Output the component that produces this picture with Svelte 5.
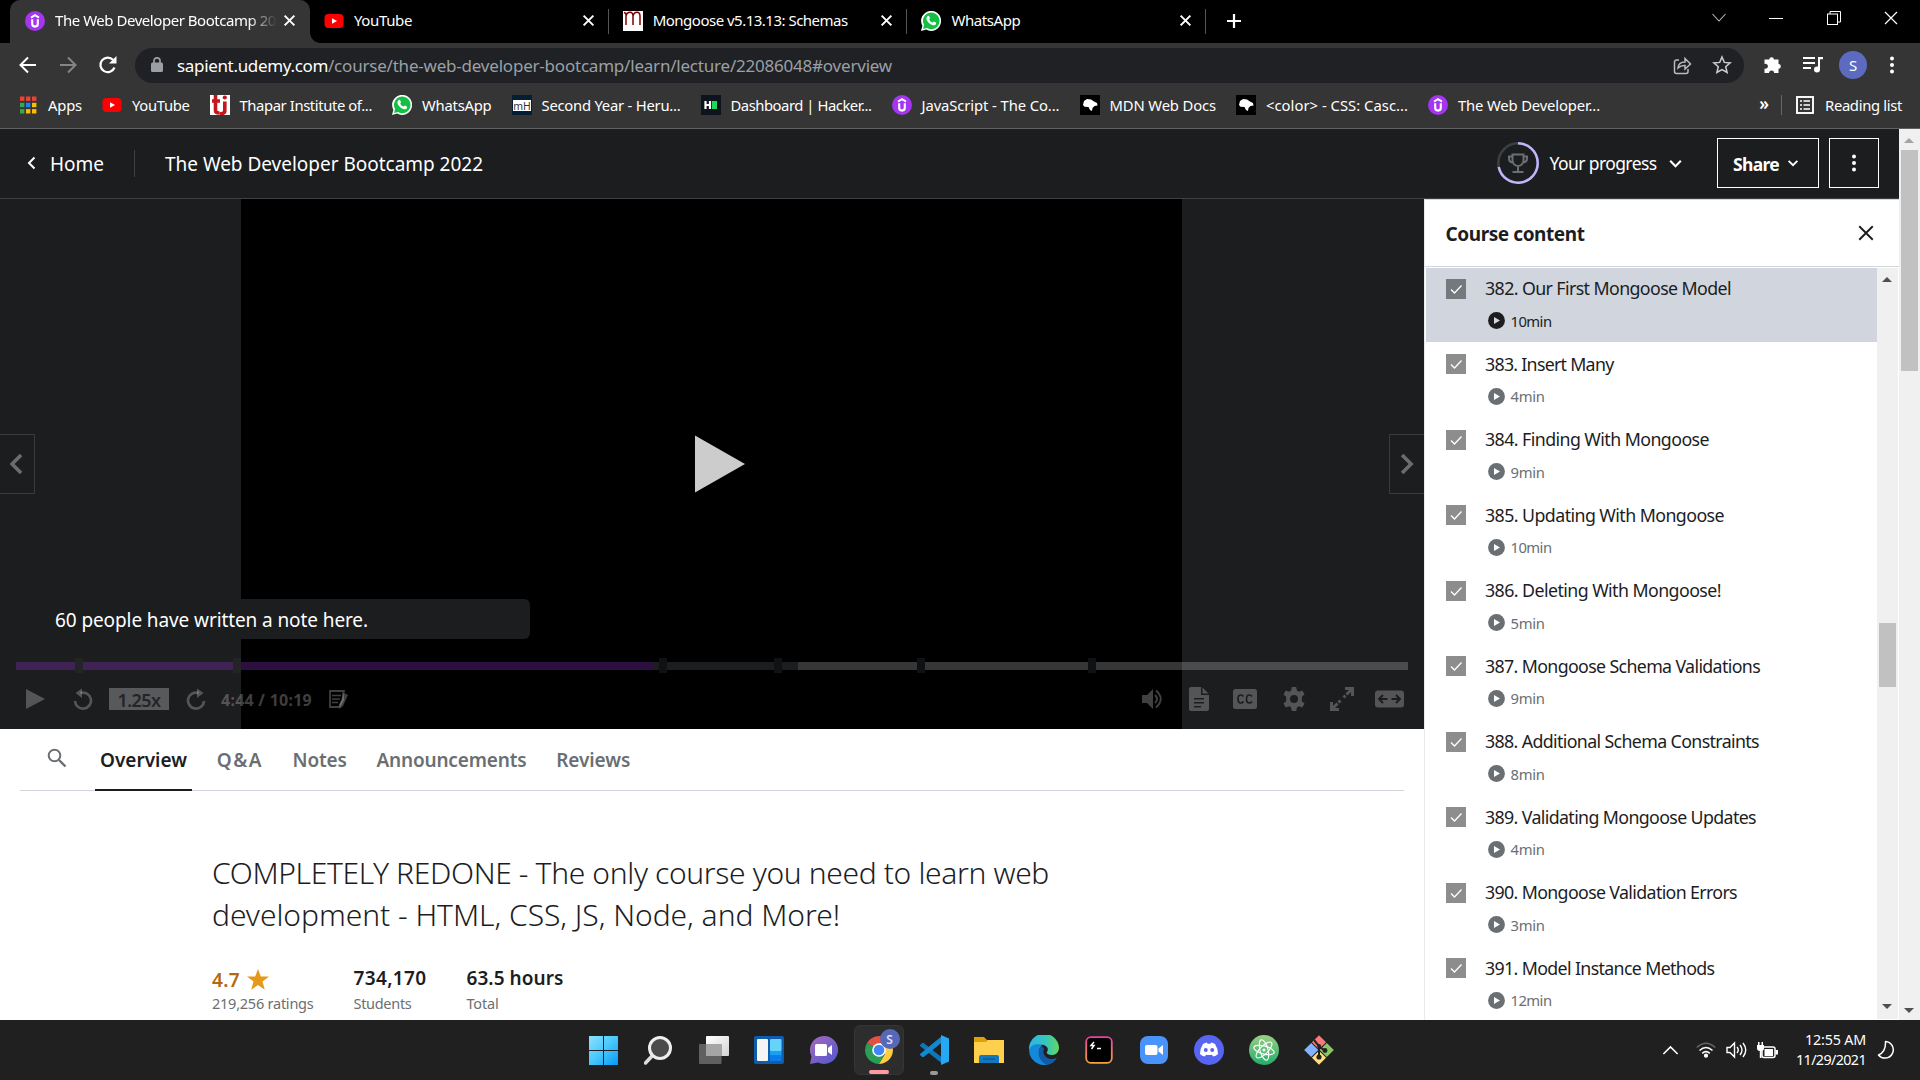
<script>
  // Tracks a label out (or in) so that it occupies the given width.
  function fit(node, width) {
    node.style.letterSpacing = '0';
    const natural = node.getBoundingClientRect().width;
    const count = node.textContent.length;
    node.style.letterSpacing = `${(width - natural) / count}px`;
  }

  const tabs = [
    { icon: 'udemy', title: 'The Web Developer Bootcamp 20', w: 221, active: true },
    { icon: 'youtube', title: 'YouTube', w: 58 },
    { icon: 'mongoose', title: 'Mongoose v5.13.13: Schemas', w: 195 },
    { icon: 'whatsapp', title: 'WhatsApp', w: 69 }
  ];

  const bookmarks = [
    { icon: 'apps', title: 'Apps', w: 34 },
    { icon: 'youtube', title: 'YouTube', w: 57.5 },
    { icon: 'thapar', title: 'Thapar Institute of...', w: 132.5 },
    { icon: 'whatsapp', title: 'WhatsApp', w: 69.5 },
    { icon: 'mh', title: 'Second Year - Heru...', w: 139 },
    { icon: 'hacker', title: 'Dashboard | Hacker...', w: 141 },
    { icon: 'udemy', title: 'JavaScript - The Co...', w: 138 },
    { icon: 'mdn', title: 'MDN Web Docs', w: 106.5 },
    { icon: 'mdn', title: '<color> - CSS: Casc...', w: 142 },
    { icon: 'udemy', title: 'The Web Developer...', w: 142 }
  ];

  const lectures = [
    { title: '382. Our First Mongoose Model', w: 246, time: '10min', active: true },
    { title: '383. Insert Many', w: 128.5, time: '4min' },
    { title: '384. Finding With Mongoose', w: 224, time: '9min' },
    { title: '385. Updating With Mongoose', w: 239, time: '10min' },
    { title: '386. Deleting With Mongoose!', w: 236, time: '5min' },
    { title: '387. Mongoose Schema Validations', w: 275, time: '9min' },
    { title: '388. Additional Schema Constraints', w: 274, time: '8min' },
    { title: '389. Validating Mongoose Updates', w: 271, time: '4min' },
    { title: '390. Mongoose Validation Errors', w: 252, time: '3min' },
    { title: '391. Model Instance Methods', w: 229.5, time: '12min' }
  ];

  const pageTabs = [
    { title: 'Overview', w: 87, active: true },
    { title: 'Q&A', w: 46 },
    { title: 'Notes', w: 54 },
    { title: 'Announcements', w: 150 },
    { title: 'Reviews', w: 74 }
  ];

  const markers = [75, 233, 659, 774, 917, 1088];
  const taskIcons = ['windows', 'search', 'taskview', 'widgets', 'teams', 'chrome', 'vscode', 'explorer', 'edge', 'terminal', 'zoom', 'discord', 'atom', 'git'];
</script>

{#snippet favicon(name)}
  <svg class="fav" width="20" height="20" viewBox="0 0 20 20">
    {#if name === 'udemy'}
      <circle cx="10" cy="10" r="10" fill="#a435f0" />
      <path d="M6 6.600 10 4.200l4 2.400" fill="none" stroke="#fff" stroke-width="1.900" />
      <path d="M7.200 8.200v4.600a2.800 2.800 0 0 0 5.600 0V8.200" fill="none" stroke="#fff" stroke-width="2.100" />
    {:else if name === 'youtube'}
      <rect x="0.5" y="3" width="19" height="14" rx="4" fill="#f00" />
      <path d="M8 7.200v5.600l5-2.800z" fill="#fff" />
    {:else if name === 'mongoose'}
      <rect width="20" height="20" fill="#fff" />
      <path d="M1 1.500l2 1V14M3 5q1-3.800 4-3.800t3 3.800v9M10 5q1-3.800 4-3.800t3 3.800v9" fill="none" stroke="#800000" stroke-width="1.500" />
    {:else if name === 'whatsapp'}
      <path d="M0 20l1.400-5.200A10 10 0 1 1 5.200 18.600z" fill="#fff" />
      <path d="M2 18l1.100-3.900A8.300 8.300 0 1 1 6 17z" fill="#12c143" />
      <path d="M6.500 5.200c.7-.7 1.500-.5 1.800.3l.6 1.500c.2.600-.8 1.400-.6 1.800.7 1.300 1.700 2.200 3.100 2.800.5.200 1.200-1.200 1.700-1l1.700.8c.6.4.4 1.700-.4 2.300-1.300 1-3 .5-4.800-.5-2-1.200-3.500-3-4.100-4.900-.3-1.200.2-2.300 1-3.100z" fill="#fff" />
    {:else if name === 'apps'}
      {#each [['#ea4335', '#ea4335', '#ea4335'], ['#34a853', '#1a83f5', '#fbbc05'], ['#34a853', '#fbbc05', '#fbbc05']] as row, y}
        {#each row as c, x}<rect x={2 + x * 6} y={1.5 + y * 6.300} width="4.400" height="4.400" fill={c} />{/each}
      {/each}
    {:else if name === 'thapar'}
      <rect width="20" height="20" fill="#fff" />
      <path d="M5.500 0v15.500q0 2.500 4 2.500M2 6h8M14.800 6.500v9.500q0 2.500-5 3" fill="none" stroke="#c4161c" stroke-width="3.600" />
      <circle cx="14.800" cy="2.500" r="2.100" fill="#c4161c" />
    {:else if name === 'mh'}
      <rect width="20" height="20" fill="#051e34" /><rect x="1" y="5" width="18" height="11" fill="#fff" />
      <text x="10" y="14.500" text-anchor="middle" font-size="10.500" fill="#333">mH</text>
    {:else if name === 'hacker'}
      <rect width="20" height="20" fill="#0e141e" />
      <path d="M4.500 6v8M9 6v8M4 10h5" stroke="#fff" stroke-width="2.200" /><rect x="11" y="6" width="5" height="8" fill="#1fd65f" />
    {:else if name === 'mdn'}
      <rect width="20" height="20" fill="#000" />
      <path d="M3 10 4 6l3-2 4 .5 3 2 3 1.500.5 2.500-3 .5-2 2-.5 3-2-1-1.500-3-4-.3z" fill="#fff" />
    {/if}
  </svg>
{/snippet}

{#snippet chevron(dir, size, w)}
  <svg width={size} height={size} viewBox="0 0 16 16" fill="none" stroke="currentColor" stroke-width={w}>
    <path d={dir === 'down' ? 'M3 5.500l5 5 5-5' : dir === 'left' ? 'M10.500 2.500l-5.500 5.500 5.500 5.500' : dir === 'up' ? 'M2 11l6-6 6 6' : 'M5 2.500l5.500 5.500-5.500 5.500'} />
  </svg>
{/snippet}

{#snippet cross(size, w)}
  <svg width={size} height={size} viewBox="0 0 16 16" fill="none" stroke="currentColor" stroke-width={w}><path d="M2 2l12 12M14 2 2 14" /></svg>
{/snippet}

{#snippet dots()}
  <svg width="20" height="20" viewBox="0 0 20 20" fill="currentColor"><circle cx="10" cy="3.500" r="2" /><circle cx="10" cy="10" r="2" /><circle cx="10" cy="16.500" r="2" /></svg>
{/snippet}

{#snippet taskIcon(name)}
  <svg width="30" height="30" viewBox="0 0 30 30">
    {#if name === 'windows'}
      <defs><linearGradient id="win" x2="1" y2="1"><stop stop-color="#8be2ff" /><stop offset=".5" stop-color="#48c8fb" /><stop offset="1" stop-color="#0797f8" /></linearGradient></defs>
      <path d="M0 1h14v14H0zM15 1h14v14H15zM0 16h14v14H0zM15 16h14v14H15z" fill="url(#win)" />
    {:else if name === 'search'}
      <path d="M9 20l-7.500 8" stroke="#ddd" stroke-width="3.500" stroke-linecap="round" /><circle cx="16" cy="13" r="10.500" fill="#4b4b4b" stroke="#eee" stroke-width="3" />
    {:else if name === 'taskview'}
      <defs><linearGradient id="tv" x2="1" y2="1"><stop stop-color="#fff" /><stop offset="1" stop-color="#d4d4d4" /></linearGradient></defs>
      <rect x="7" y="1" width="23" height="20" rx="1" fill="url(#tv)" /><rect y="9" width="22.500" height="20" rx="1" fill="#606060" /><rect x="7" y="9" width="15.500" height="12" fill="#a5a5a5" />
    {:else if name === 'widgets'}
      <rect y="1" width="30" height="28" rx="2" fill="#0f5cae" /><rect x="3" y="4" width="11" height="22" rx="1" fill="#f4f4f4" /><rect x="16" y="4" width="11.500" height="12" rx="1" fill="#66d4fa" /><rect x="16" y="16" width="11.500" height="4.500" fill="#1aa0f3" /><rect x="16" y="20.500" width="11.500" height="5.500" fill="#087ce8" />
    {:else if name === 'teams'}
      <defs><linearGradient id="tm" x2="1" y2="1"><stop stop-color="#a76bbb" /><stop offset="1" stop-color="#4e57d0" /></linearGradient></defs>
      <path d="M15 1a14 14 0 1 1-6 26.600L1 29l1.500-7.500A14 14 0 0 1 15 1z" fill="url(#tm)" /><rect x="6" y="9" width="12" height="12" rx="1.500" fill="#fff" /><path d="M19 13l4-3v10l-4-3z" fill="#fff" />
    {:else if name === 'chrome'}
      <g transform="translate(1 1)">
        <path d="M14 14 1.900 7A14 14 0 0 1 26.100 7z" fill="#e15241" /><path d="M14 14 1.900 7A14 14 0 0 0 14 28l6-11z" fill="#2a9d57" /><path d="M14 7h12.100A14 14 0 0 1 14 28l6-10z" fill="#ffcd40" />
        <circle cx="14" cy="14" r="6.800" fill="#fff" /><circle cx="14" cy="14" r="5.300" fill="#4285f4" />
      </g>
    {:else if name === 'vscode'}
      <path d="M1 10.500 4 8l19 15v5z" fill="#0b77bd" stroke="#0b77bd" stroke-linejoin="round" /><path d="M1 19.500 4 22 23 7V1.500z" fill="#1389cf" stroke="#1389cf" stroke-linejoin="round" /><path d="M22 0l8 3.500v23L22 30z" fill="#24a9f2" />
    {:else if name === 'explorer'}
      <path d="M0 2h10l3 3h17v8H0z" fill="#dfa008" /><path d="M0 7h12l2-2h16v23H0z" fill="#ffd04d" /><path d="M5 28v-6q0-2 2-2h16q2 0 2 2v6z" fill="#1478be" /><path d="M9 24h12" stroke="#084f88" />
    {:else if name === 'edge'}
      <defs><linearGradient id="ed"><stop stop-color="#2bb5ea" /><stop offset=".6" stop-color="#38c6b8" /><stop offset="1" stop-color="#63d95b" /></linearGradient></defs>
      <path d="M0 15A15 15 0 0 1 30 12.500c0 5-3.500 7.500-7 7.500-4 0-6-1.500-5-3 3-5-3-8-7-7Q4 9.500 0 15z" fill="url(#ed)" />
      <path d="M0 15C2 9 9 8 13 10.500q-4 3-2 8c1.500 4.500 7 7 12 5.500l4 0A15 15 0 0 1 0 15z" fill="#1489d8" />
      <path d="M13 11c-6 4-4 14 4 18.800Q24 30 28 22.500 22 26 17 22q-4-4-2-8z" fill="#105ca8" />
    {:else if name === 'terminal'}
      <defs><linearGradient id="te" x2="0" y2="1"><stop stop-color="#ec3da5" /><stop offset="1" stop-color="#f0a63b" /></linearGradient></defs>
      <rect x="2.200" y="2.200" width="25.600" height="25.600" rx="4.500" fill="#000" stroke="url(#te)" stroke-width="1.800" /><path d="M10 7l-3 3.500h3L7.500 14M13 13.500h4" fill="none" stroke="#fff" stroke-width="1.500" />
    {:else if name === 'zoom'}
      <rect x="1" y="1" width="28" height="28" rx="8" fill="#4a93fa" /><rect x="6" y="10" width="12.500" height="10" rx="2" fill="#fff" /><path d="M19.500 13.500l4.500-3.500v10l-4.500-3.500z" fill="#fff" />
    {:else if name === 'discord'}
      <circle cx="15" cy="15" r="15" fill="#5865f2" /><path d="M9 9q2-1.500 4-1.500l.6 1.200h2.800L17 7.500q2 0 4 1.500 3 4.500 3 10-2 2-5 2.500l-1-1.800q-3 .8-6 0l-1 1.800Q8 21 6 19q0-5.500 3-10z" fill="#fff" /><circle cx="11.800" cy="15" r="2" fill="#5865f2" /><circle cx="18.200" cy="15" r="2" fill="#5865f2" />
    {:else if name === 'atom'}
      <defs><linearGradient id="at" x2="0" y2="1"><stop stop-color="#9ccf85" /><stop offset="1" stop-color="#20ac6b" /></linearGradient></defs>
      <circle cx="15" cy="15" r="15" fill="url(#at)" />
      <g fill="none" stroke="#fff" stroke-width="1.100"><ellipse cx="15" cy="15" rx="10.500" ry="4" transform="rotate(15 15 15)" /><ellipse cx="15" cy="15" rx="10.500" ry="4" transform="rotate(75 15 15)" /><ellipse cx="15" cy="15" rx="10.500" ry="4" transform="rotate(135 15 15)" /></g><circle cx="15" cy="15" r="1.600" fill="#fff" />
    {:else if name === 'git'}
      <g transform="rotate(45 15 15)"><rect x="4.500" y="4.500" width="10" height="10" fill="#f87979" /><rect x="15.500" y="4.500" width="10" height="10" fill="#89c764" /><rect x="4.500" y="15.500" width="10" height="10" fill="#82b3fc" /><rect x="15.500" y="15.500" width="10" height="10" fill="#ffe07c" /></g>
      <path d="M10 5l5 6v12M15 11l6 5" stroke="#222" stroke-width="2" fill="none" /><circle cx="15" cy="11" r="2" fill="#222" /><circle cx="21" cy="15.500" r="2.400" fill="#222" /><circle cx="15" cy="22" r="2.600" fill="#222" />
    {/if}
  </svg>
{/snippet}

<div class="screen">
  <div class="tabstrip">
    {#each tabs as t}
      <div class="tab" class:active={t.active}>
        {@render favicon(t.icon)}
        <span class="tabtitle"><span use:fit={t.w}>{t.title}</span></span>
        {@render cross(13, 2.400)}
      </div>
    {/each}
    <svg class="plus" width="16" height="16" viewBox="0 0 16 16"><path d="M8 1v14M1 8h14" stroke="#fff" stroke-width="2.200" /></svg>
    <div class="winbtns">
      <svg width="14" height="10" viewBox="0 0 14 10"><path d="M.5 1l6.500 7 6.500-7" fill="none" stroke="#bbb" stroke-width="1.100" /></svg>
      <svg width="14" height="10" viewBox="0 0 14 10"><path d="M0 5.500h14" stroke="#fff" /></svg>
      <svg width="14" height="14" viewBox="0 0 14 14" fill="none" stroke="#fff"><rect x=".5" y="3" width="10" height="10.500" /><path d="M3 3V.5h10.500V11H11" /></svg>
      <svg width="14" height="14" viewBox="0 0 14 14"><path d="M1 1l12 12M13 1 1 13" stroke="#fff" stroke-width="1.200" /></svg>
    </div>
  </div>

  <div class="toolbar">
    <div class="nav">
      <svg width="20" height="20" viewBox="0 0 20 20" fill="none" stroke="#fff" stroke-width="2"><path d="M18 10H3M10 2.500 2.500 10l7.500 7.500" /></svg>
      <svg width="20" height="20" viewBox="0 0 20 20" fill="none" stroke="#858585" stroke-width="2"><path d="M2 10h15M10 2.500l7.500 7.500-7.500 7.500" /></svg>
      <svg width="20" height="20" viewBox="0 0 20 20"><path d="M16.500 12.500A7.300 7.300 0 1 1 15 4.800" fill="none" stroke="#fff" stroke-width="2.200" /><path d="M18.500 1v7.500H11z" fill="#fff" /></svg>
    </div>
    <div class="omnibox">
      <svg width="12" height="16" viewBox="0 0 12 16"><rect y="5.500" width="12" height="9.500" rx="1.500" fill="#9aa0a6" /><path d="M3 6V3.800a3 3 0 0 1 6 0V6" fill="none" stroke="#9aa0a6" stroke-width="1.700" /></svg>
      <div class="url"><span class="domain" use:fit={151}>sapient.udemy.com</span><span use:fit={564}>/course/the-web-developer-bootcamp/learn/lecture/22086048#overview</span></div>
      <svg class="share-ic" width="19" height="19" viewBox="0 0 19 19" fill="none" stroke="#bbb" stroke-width="1.500"><path d="M6 4H3.500a2 2 0 0 0-2 2v9.500a2 2 0 0 0 2 2H13a2 2 0 0 0 2-2V13" /><path d="M5 12q.5-6 7-6V2.500L17.500 8 12 13V9.500q-4-.3-7 2.500z" /></svg>
      <svg width="20" height="20" viewBox="0 0 20 20" fill="none" stroke="#ccc" stroke-width="1.500"><path d="M10 2l2.300 5.400 5.900.5-4.500 3.900 1.400 5.700L10 14.500l-5.100 3 1.400-5.700-4.500-3.900 5.900-.5z" /></svg>
    </div>
    <div class="ext">
      <svg width="20" height="20" viewBox="0 0 20 20" fill="#fff"><path d="M1.500 4.500h4.800a2.300 2.300 0 1 1 4.600 0h4.600v4.600a2.300 2.300 0 1 1 0 4.600V18h-4.400a2.500 2.500 0 1 0-5 0H1.500v-4.600a2.400 2.400 0 1 0 0-4.300z" /></svg>
      <svg width="20" height="18" viewBox="0 0 20 18" fill="#fff"><path d="M0 1h12v2H0zM0 6h12v2H0zM0 11h8v2H0zM15 1h5v2.200h-3V13h-2z" /><circle cx="14" cy="13.500" r="3" /></svg>
      <span class="avatar">S</span>
      {@render dots()}
    </div>
  </div>

  <div class="bookmarks">
    {#each bookmarks as b}
      <div class="bm">{@render favicon(b.icon)}<span use:fit={b.w}>{b.title}</span></div>
    {/each}
    <div class="bm-end">
      <b>»</b><i></i>
      <svg width="18" height="18" viewBox="0 0 18 18"><rect x="1" y="1" width="16" height="16" fill="none" stroke="#fff" stroke-width="1.900" /><path d="M4 5h2M4 9h2M4 13h2M7.500 5H14M7.500 9H14M7.500 13H14" stroke="#fff" stroke-width="1.600" /></svg>
      <span use:fit={77}>Reading list</span>
    </div>
  </div>

  <div class="page">
    <div class="app">
      <header>
        <div class="home">{@render chevron('left', 16, 2)}<span use:fit={54}>Home</span></div>
        <i class="sep"></i>
        <span class="title" use:fit={318}>The Web Developer Bootcamp 2022</span>
        <div class="progress">
          <svg width="42" height="42" viewBox="0 0 42 42" fill="none">
            <circle cx="21" cy="21" r="19.700" stroke="#3e4143" stroke-width="2.500" />
            <path d="M21 1.300A19.700 19.700 0 1 1 1.700 25" stroke="#c0b4fb" stroke-width="2.500" />
            <g stroke="#6a6f73" stroke-width="2"><path d="M15.500 12.500h11v6q-.5 5-5.500 5.500-5-.5-5.500-5.500zM15.500 14.500H12v2q0 4 4.500 4M26.500 14.500H30v2q0 4-4.500 4M21 24v5.500M15.500 30h11" /></g>
          </svg>
          <span use:fit={107}>Your progress</span>
          {@render chevron('down', 17, 2)}
        </div>
        <div class="btn share"><b use:fit={46}>Share</b>{@render chevron('down', 14, 2.100)}</div>
        <div class="btn more">{@render dots()}</div>
      </header>

      <div class="body">
        <main>
          <section class="player">
            <div class="frame"></div>
            <svg class="bigplay" width="50" height="60" viewBox="0 0 50 60"><path d="M0 1.500v57l50-28.500z" fill="#ccc" /></svg>
            <div class="side prev">{@render chevron('left', 26, 2.200)}</div>
            <div class="side next">{@render chevron('right', 26, 2.200)}</div>
            <div class="note"><span use:fit={313}>60 people have written a note here.</span></div>
            <div class="track">
              <i class="played"></i><i class="buffered"></i><i class="rest"></i>
            </div>
            {#each markers as m}<i class="marker" style="left:{m}px"></i>{/each}
            <div class="controls">
              <svg width="20" height="22" viewBox="0 0 20 22"><path d="M0 1v20l19-10z" fill="currentColor" /></svg>
              <svg class="replay" width="20" height="22" viewBox="0 0 20 22"><path d="M7.500 5A8 8 0 1 1 2 13" fill="none" stroke="currentColor" stroke-width="2.700" /><path d="M2.500 5 9 .5v9.500z" fill="currentColor" /></svg>
              <span class="rate"><b use:fit={43}>1.25x</b></span>
              <svg class="forward" width="20" height="22" viewBox="0 0 20 22"><path d="M12.500 5A8 8 0 1 0 18 13" fill="none" stroke="currentColor" stroke-width="2.700" /><path d="M17.500 5 11 .5v9.500z" fill="currentColor" /></svg>
              <b class="time" use:fit={91}>4:44 / 10:19</b>
              <svg class="noteic" width="20" height="19" viewBox="0 0 20 19"><path d="M1 1h14l-1 3v6l-4 7H1z" fill="none" stroke="currentColor" stroke-width="1.800" /><path d="M3 5.500h9M3 9h8M3 12.500h6" stroke="currentColor" stroke-width="1.600" /><path d="M15 3l4 2-5 11-3.500 3V14z" fill="currentColor" /></svg>
              <div class="right">
                <svg width="22" height="20" viewBox="0 0 22 20"><path d="M0 6h5l6-6v20l-6-6H0z" fill="currentColor" /><path d="M13 6q4 4 0 8M14 1.500q9.500 8.500 0 17" fill="none" stroke="currentColor" stroke-width="1.900" /></svg>
                <svg width="20" height="24" viewBox="0 0 20 24"><path fill="currentColor" fill-rule="evenodd" d="M2 0h10v8h8v14q0 2-2 2H2q-2 0-2-2V2q0-2 2-2zM13.500.5 19.500 6.500h-6zM5 11v1.500h10V11zM5 15v1.500h10V15zM5 19v1.500h7V19z" /></svg>
                <svg width="24" height="20" viewBox="0 0 24 20"><mask id="ccmask"><rect width="24" height="20" fill="#fff" /><path d="M10.500 7.500Q9.500 6 7.800 6 5 6 5 10t2.800 4q1.700 0 2.700-1.500M19 7.500Q18 6 16.300 6q-2.800 0-2.800 4t2.800 4q1.700 0 2.700-1.500" fill="none" stroke="#000" stroke-width="1.700" /></mask><rect width="24" height="20" rx="2.500" fill="currentColor" mask="url(#ccmask)" /></svg>
                <svg width="24" height="24" viewBox="0 0 24 24"><path fill="currentColor" fill-rule="evenodd" d="M9.800 0h4.400l.7 3.500 2 1.200L20.300 3.500l2.200 3.900-2.700 2.400v4.400l2.700 2.400-2.200 3.900-3.400-1.200-2 1.200-.7 3.500H9.800l-.7-3.500-2-1.200-3.400 1.200-2.200-3.900 2.700-2.400V9.800L1.500 7.400l2.200-3.900 3.400 1.200 2-1.200zM12 8a4 4 0 1 0 0 8 4 4 0 0 0 0-8z" /></svg>
                <svg width="24" height="24" viewBox="0 0 24 24" fill="none" stroke="currentColor" stroke-width="3"><path d="M15 1.500h7.500V9M22 2l-5.500 5.500M15.500 8.500l-2 2M1.500 15v7.500H9M2 22l5.500-5.500M8.500 15.500l2-2" /></svg>
                <svg class="wide" width="29" height="18" viewBox="0 0 29 18"><mask id="widemask"><rect width="29" height="18" fill="#fff" /><path d="M12.500 9h-8M8 5 4 9l4 4M16.500 9h8M21 5l4 4-4 4" fill="none" stroke="#000" stroke-width="2" /></mask><rect width="29" height="17" y=".5" rx="3" fill="currentColor" mask="url(#widemask)" /></svg>
              </div>
            </div>
          </section>

          <nav class="pagetabs">
            <svg width="20" height="20" viewBox="0 0 20 20" fill="none" stroke="#6a6f73" stroke-width="2"><circle cx="7.500" cy="7.500" r="5.800" /><path d="M12 12l6.500 6.500" stroke-width="2.400" /></svg>
            {#each pageTabs as t}
              <div class="ptab" class:on={t.active}><b use:fit={t.w}>{t.title}</b></div>
            {/each}
          </nav>

          <section class="overview">
            <div class="headline">
              <div><span use:fit={837}>COMPLETELY REDONE - The only course you need to learn web</span></div>
              <div><span use:fit={628}>development - HTML, CSS, JS, Node, and More!</span></div>
            </div>
            <div class="stats">
              <div class="stat rating">
                <div class="big"><b use:fit={28}>4.7</b><svg width="22" height="21" viewBox="0 0 22 21"><path d="M11 0l2.800 7.600H22l-6.500 5 2.300 8.200L11 16l-6.800 4.800 2.300-8.200-6.500-5h8.200z" fill="#e59819" /></svg></div>
                <div class="small"><span use:fit={101.5}>219,256 ratings</span></div>
              </div>
              <div class="stat"><div class="big"><b use:fit={73}>734,170</b></div><div class="small"><span use:fit={58}>Students</span></div></div>
              <div class="stat"><div class="big"><b use:fit={97}>63.5 hours</b></div><div class="small"><span use:fit={32}>Total</span></div></div>
            </div>
          </section>
        </main>

        <aside>
          <div class="ahead"><b use:fit={139}>Course content</b>{@render cross(18, 1.700)}</div>
          <div class="list">
            <div class="items">
              {#each lectures as l}
                <div class="item" class:current={l.active}>
                  <svg class="check" width="20" height="20" viewBox="0 0 20 20"><rect width="20" height="20" fill={l.active ? '#75787d' : '#8d8d8d'} /><path d="M5 10.500l3.500 3.500L15.500 6.500" fill="none" stroke="#fff" stroke-width="1.300" /></svg>
                  <div>
                    <div class="lt"><span use:fit={l.w}>{l.title}</span></div>
                    <div class="ld"><svg width="17" height="17" viewBox="0 0 17 17"><circle cx="8.500" cy="8.500" r="8.400" fill="currentColor" /><path d="M6 5v7l6-3.500z" fill={l.active ? '#d1d7dc' : '#fff'} /></svg><span use:fit={l.time.length === 5 ? 41 : 34}>{l.time}</span></div>
                  </div>
                </div>
              {/each}
            </div>
            <div class="scroll inner"><i class="up dark"></i><i class="thumb"></i><i class="down"></i></div>
          </div>
        </aside>
      </div>
    </div>
    <div class="scroll outer"><i class="up"></i><i class="thumb"></i><i class="down"></i></div>
  </div>

  <footer>
    <div class="dock">
      {#each taskIcons as name}
        <div class="cell" class:focus={name === 'chrome'} class:open={name === 'vscode'}>
          {@render taskIcon(name)}
          {#if name === 'chrome'}<span class="badge">S</span>{/if}
        </div>
      {/each}
    </div>
    <div class="tray">
      {@render chevron('up', 19, 1.300)}
      <svg class="wifi" width="20" height="16" viewBox="0 0 20 16" fill="none" stroke="#fff" stroke-width="1.600"><path d="M.8 5.500Q10-3 19.200 5.500" stroke="#666" /><path d="M3.500 8.500q6.500-6 13 0M6.200 11.300q3.800-3.300 7.600 0" /><circle cx="10" cy="13.700" r="1.300" fill="#fff" /></svg>
      <svg class="vol" width="21" height="18" viewBox="0 0 21 18" fill="none" stroke="#fff" stroke-width="1.400"><path d="M1 6.500h3L8.500 2v14L4 11.500H1zM11 6q2.500 3 0 6M14 4q4 5 0 10M17 2q5.500 7 0 14" /></svg>
      <svg class="bat" width="21" height="17" viewBox="0 0 21 17"><rect x="5" y="5" width="13" height="10.500" rx="2" fill="none" stroke="#fff" stroke-width="1.500" /><path d="M7.500 7h8.500v7H7.500zM18.500 8H21v4.500h-2.500zM0 3h7v4q-.5 2-2.500 2v7H2.800V9Q.5 9 0 7zM1 0h1.500v3H1zM4.500 0H6v3H4.500z" fill="#fff" /></svg>
      <div class="clock"><div><span use:fit={61}>12:55 AM</span></div><div><span use:fit={70}>11/29/2021</span></div></div>
      <svg class="moon" width="18" height="20" viewBox="0 0 18 20"><path d="M8.500 1.500A8.300 8.300 0 1 1 1.500 15Q9 12 8.500 1.500z" fill="none" stroke="#fff" stroke-width="1.500" stroke-linejoin="round" /></svg>
    </div>
  </footer>
</div>

<style>
  :global(body) { background: #000; overflow: hidden; }
  * { box-sizing: border-box; }
  svg { display: block; flex: none; }
  .screen { width: 1920px; height: 1080px; display: flex; flex-direction: column; font-family: "Noto Sans", "Open Sans", sans-serif; color: #fff; overflow: hidden; white-space: nowrap; }
  b { font-weight: 600; }

  .tabstrip { height: 43px; background: #000; display: flex; padding-left: 10px; align-items: stretch; flex: none; }
  .tab { width: 298.700px; display: flex; align-items: center; padding: 0 14px 2px 14px; position: relative; font-size: 15px; }
  .tab:first-child { width: 300px; padding-left: 15px; }
  .tab.active { background: #353535; border-radius: 10px 10px 0 0; }
  .tab.active::after { content: ''; position: absolute; left: 100%; bottom: 0; width: 10px; height: 10px; background: radial-gradient(circle at 100% 0, #000 9.500px, #353535 10px); }
  .tab:not(.active)::after { content: ''; position: absolute; right: 0; top: 9px; height: 25px; width: 1px; background: #555; }
  .tabtitle { flex: 1; min-width: 0; margin: -1px 9px 0 10px; }
  .active .tabtitle { margin-right: 4px; mask-image: linear-gradient(to right, #000 86%, transparent 99%); }
  .plus { margin: 13px 0 0 20px; }
  .winbtns { margin-left: auto; display: flex; gap: 43.500px; align-items: center; padding: 0 22px 7px 0; }

  .toolbar { height: 45px; background: #353535; display: flex; align-items: center; flex: none; padding: 0 18px 1px 0; }
  .nav { display: flex; gap: 20px; padding-left: 18px; width: 135px; flex: none; }
  .omnibox { width: 1609.500px; height: 35px; border-radius: 18px; background: #202124; display: flex; align-items: center; padding: 0 12px 0 16px; }
  .url { margin-left: 14px; flex: 1; font-size: 17px; color: #9aa0a6; }
  .domain { color: #fff; }
  .share-ic { margin-right: 20px; }
  .ext { display: flex; align-items: center; margin-left: 19px; gap: 20px; }
  .avatar { width: 28px; height: 28px; border-radius: 50%; background: #5c6bc0; display: grid; place-items: center; font-size: 15px; margin-left: -4px; margin-right: -5px; }

  .bookmarks { height: 41px; background: #353535; border-bottom: 1px solid #616161; display: flex; gap: 20px; padding: 0 18px 6px 18px; align-items: center; font-size: 14.800px; flex: none; }
  .bm { display: flex; gap: 10px; align-items: center; }
  .bm-end { margin-left: auto; display: flex; align-items: center; }
  .bm-end b { font-size: 17px; margin-right: 12px; margin-top: -4px; }
  .bm-end i { width: 1px; height: 20px; background: #666; margin-right: 14px; }
  .bm-end svg { margin-right: 11px; }

  .page { height: 891px; display: flex; flex: none; background: #fff; }
  .app { width: 1899px; display: flex; flex-direction: column; }
  header { height: 70px; background: #1c1d1f; border-bottom: 1px solid #3e4143; display: flex; align-items: center; padding: 0 20px 1px 24px; font-size: 17.500px; flex: none; }
  .home { display: flex; align-items: center; gap: 10px; width: 110px; font-size: 19px; }
  .home span, .title { padding-top: 2px; }
  .sep { width: 1px; height: 27px; background: #3e4143; margin-right: 30px; }
  .title { font-size: 19px; }
  .progress { margin-left: auto; display: flex; align-items: center; gap: 10.500px; margin-right: 33px; }
  .btn { height: 50px; border: 1px solid #fff; display: flex; align-items: center; justify-content: center; }
  .share { width: 102px; gap: 7px; margin-right: 10px; padding-right: 3px; }
  .share b { font-weight: 700; padding-top: 1px; }
  .more { width: 50px; }

  .body { display: flex; flex: 1; min-height: 0; }
  main { width: 1424px; overflow: hidden; color: #1c1d1f; }
  .player { height: 530px; background: #1c1d1f; position: relative; }
  .frame { width: 941px; height: 530px; margin-left: 241px; background: #000; }
  .bigplay { position: absolute; left: 695px; top: 235px; }
  .side { position: absolute; top: 235px; width: 35px; height: 60px; border: 1px solid #3a3b3e; color: #6b6c6e; display: grid; place-items: center; }
  .prev { left: 0; border-left: 0; }
  .next { right: 0; border-right: 0; }
  .note { position: absolute; left: 39px; top: 400px; width: 491px; height: 40px; border-radius: 6px; background: #1c1d1f; color: #fff; padding: 2px 0 0 16px; display: flex; align-items: center; font-size: 19px; }
  .track { position: absolute; left: 16px; top: 463px; width: 1392px; height: 8px; display: flex; }
  .played { width: 638px; background: rgba(150, 50, 212, .3); }
  .buffered { width: 144px; background: #1c1d1e; }
  .rest { flex: 1; background: rgba(255, 255, 255, .21); }
  .marker { position: absolute; top: 459px; width: 7.500px; height: 15px; background: #101112; }
  .marker:nth-of-type(-n+2) { background: #232426; }
  .controls { position: absolute; left: 26px; right: 20px; top: 485px; height: 30px; display: flex; align-items: center; color: rgba(255, 255, 255, .25); font-size: 16px; }
  .replay { margin-left: 27px; }
  .rate { margin-left: 16px; width: 60px; height: 22px; background: #58595b; color: #242527; display: grid; place-items: center; font-size: 18px; line-height: 22px; padding-top: 1px; }
  .forward { margin-left: 17px; }
  .time { margin-left: 15px; font-weight: 700; padding-top: 2px; }
  .noteic { margin-left: 17px; }
  .right { margin-left: auto; display: flex; align-items: center; gap: 24.500px; }
  .wide { margin-left: -3.500px; }

  .pagetabs { height: 62px; margin: 0 20px; border-bottom: 1px solid #d1d7dc; display: flex; padding-left: 27px; font-size: 19px; color: #6a6f73; }
  .pagetabs > svg { margin: 19px 28px 0 0; }
  .ptab { padding: 18px 5px 0; margin-right: 19.800px; height: 62px; line-height: 26px; }
  .on { color: #1c1d1f; border-bottom: 2px solid #1c1d1f; }
  .overview { padding: 61px 0 0 212px; }
  .headline { font-size: 30px; line-height: 42px; font-weight: 350; }
  .stats { display: flex; margin-top: 29px; }
  .stat { margin-right: 40px; }
  .rating .big { color: #b4690e; gap: 7px; padding-top: 3px; }
  .big { font-size: 19px; height: 27px; line-height: 25px; display: flex; align-items: center; }
  .big svg { margin-top: -1px; }
  .small { font-size: 14.500px; line-height: 22px; color: #6a6f73; }

  aside { width: 475px; color: #1c1d1f; border-left: 1px solid #e8eaec; display: flex; flex-direction: column; }
  .ahead { height: 68px; border: 1px solid #d1d7dc; border-width: 1px 0; display: flex; justify-content: space-between; align-items: center; padding: 0 24px 0 20.500px; font-size: 19px; }
  .ahead b { padding-top: 1px; font-weight: 700; }
  .list { display: flex; height: 751px; margin-top: 1px; }
  .items { flex: 1; overflow: hidden; margin-left: 1px; }
  .item { height: 75.500px; display: flex; padding: 10.500px 0 0 20px; gap: 19px; }
  .current { background: linear-gradient(#d1d5dd 74px, #fff 74px); }
  .lt { font-size: 17.800px; line-height: 24px; margin-top: -2.500px; font-weight: 380; }
  .ld { display: flex; align-items: center; gap: 6px; margin: 9.500px 0 0 2.500px; line-height: 22px; font-size: 14.800px; color: #6a6f73; }
  .current .ld { color: #1c1d1f; }

  .scroll { position: relative; background: #f0f0f0; flex: none; }
  .outer { width: 21px; }
  .inner { width: 22px; border-right: 1px solid #fff; }
  .scroll i { position: absolute; }
  .thumb { left: 2px; width: 17px; background: #c1c1c1; }
  .outer .thumb { top: 21px; height: 221px; }
  .inner .thumb { top: 355px; height: 64px; }
  .up, .down { left: 5px; border: 5px solid transparent; }
  .up { top: 4px; border-bottom: 5px solid #a3a3a3; }
  .dark { border-bottom-color: #505050; top: 4px; }
  .down { bottom: 2px; border-top: 5px solid #505050; }
  .inner .down { bottom: 5px; }

  footer { height: 60px; background: #202020; display: flex; justify-content: space-between; padding: 0 25px 0 576px; }
  .dock { display: flex; align-items: center; }
  .cell { width: 55px; height: 50px; display: grid; place-items: center; position: relative; }
  .focus { width: 50px; margin: 0 2.500px; background: #2d2d2d; border: 1px solid #353535; border-radius: 6px; }
  .focus::after, .open::after { content: ''; position: absolute; bottom: 0; height: 4px; border-radius: 2px; }
  .focus::after { left: 14px; width: 20px; background: #ff99a4; }
  .open::after { left: 23.500px; width: 8px; background: #9a9a9a; }
  .badge { position: absolute; right: 3px; top: 3px; width: 20px; height: 20px; border-radius: 50%; background: #5868b8; color: #dfe3ff; font-size: 12px; font-weight: 600; display: grid; place-items: center; }
  .tray { display: flex; align-items: center; }
  .wifi { margin-left: 15.500px; }
  .vol { margin-left: 10px; }
  .bat { margin-left: 10px; }
  .clock { width: 88.500px; font-size: 14.300px; line-height: 20.500px; text-align: right; }
  .moon { margin-left: 11px; }
</style>
